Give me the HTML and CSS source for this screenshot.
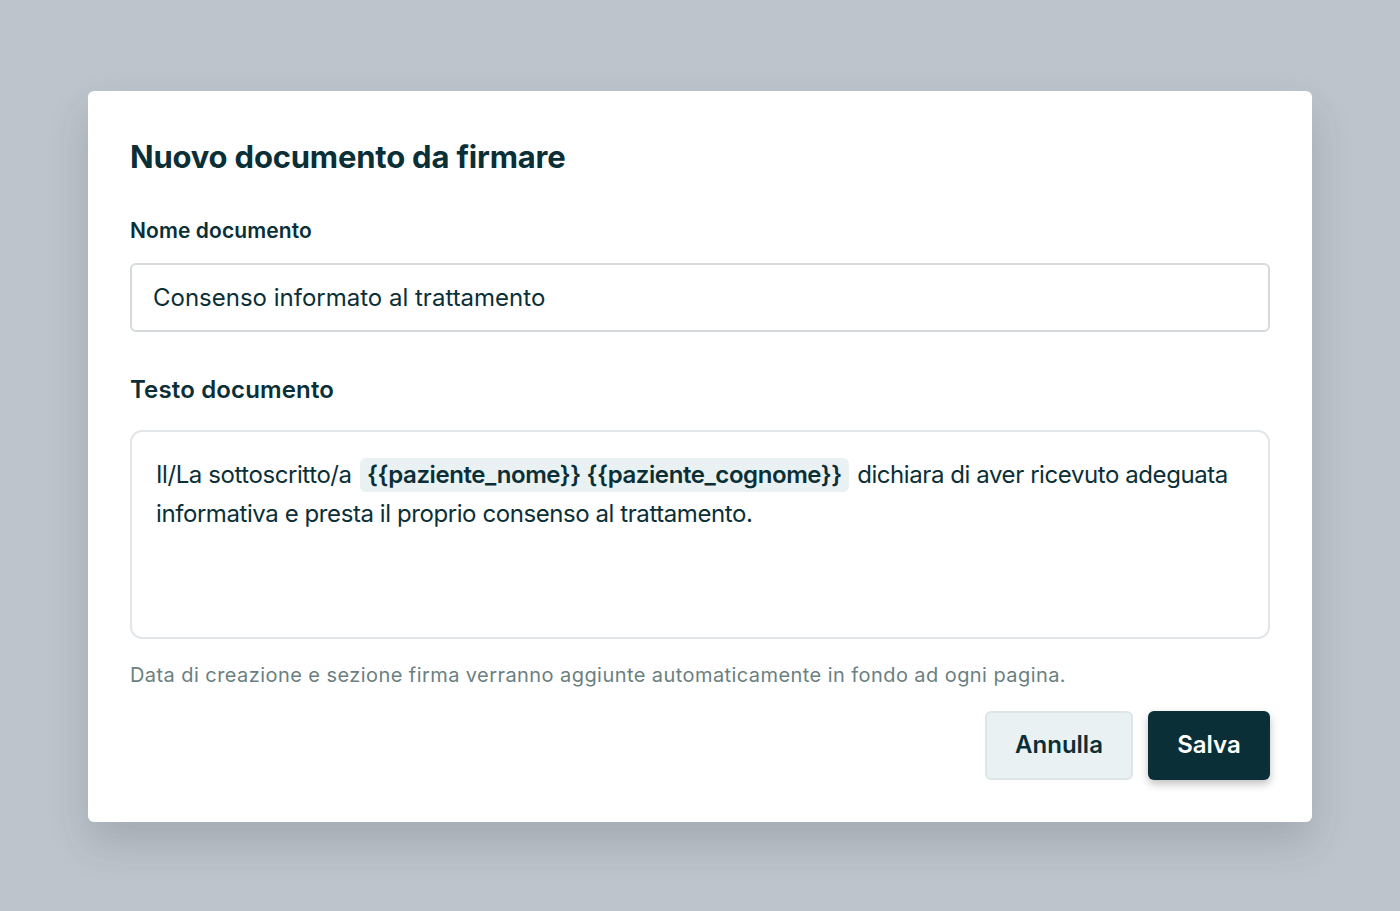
FILE: index.html
```html
<!DOCTYPE html>
<html lang="it">
<head>
<meta charset="utf-8">
<title>Nuovo documento da firmare</title>
<link rel="stylesheet" href="styles.css">
</head>
<body>
<div class="overlay">
  <div class="modal">
    <h1 class="title">Nuovo documento da firmare</h1>
    <label class="label">Nome documento</label>
    <div class="input">Consenso informato al trattamento</div>
    <h2 class="section">Testo documento</h2>
    <div class="editor">
      <p>Il/La sottoscritto/a <span class="chip">{{paziente_nome}} {{paziente_cognome}}</span> dichiara di aver ricevuto adeguata informativa e presta il proprio consenso al trattamento.</p>
    </div>
    <p class="hint">Data di creazione e sezione firma verranno aggiunte automaticamente in fondo ad ogni pagina.</p>
    <div class="actions">
      <button class="btn btn-secondary">Annulla</button>
      <button class="btn btn-primary">Salva</button>
    </div>
  </div>
</div>
</body>
</html>
```

FILE: styles.css
```css
* { box-sizing: border-box; }
html, body { margin: 0; padding: 0; }
body {
  font-family: Inter, "Noto Sans", sans-serif;
  background: #bdc4cc;
  color: #0b2f37;
  width: 1400px;
  height: 911px;
  overflow: hidden;
}
.overlay {
  padding: 91px 88px 0 88px;
}
.modal {
  background: #ffffff;
  border-radius: 6px;
  height: 731px;
  padding: 38px 42px 0 42px;
  box-shadow: 0 20px 40px rgba(40, 50, 60, 0.18);
  display: flex;
  flex-direction: column;
}
.title {
  margin: 0;
  font-size: 31px;
  font-weight: 700;
  line-height: 56px;
  letter-spacing: -0.2px;
}
.label {
  margin-top: 31px;
  font-size: 21px;
  font-weight: 600;
  line-height: 30px;
  letter-spacing: 0.1px;
}
.input {
  margin-top: 17px;
  height: 69px;
  border: 2px solid #d6dadc;
  border-radius: 6px;
  padding: 0 21px;
  display: flex;
  align-items: center;
  font-size: 24px;
  line-height: 30px;
}
.section {
  margin: 40px 0 0 0;
  font-size: 24px;
  font-weight: 600;
  line-height: 36px;
  letter-spacing: 0.15px;
}
.editor {
  margin-top: 22px;
  height: 209px;
  border: 2px solid #e2e6e8;
  border-radius: 12px;
  padding: 23px 24px;
}
.editor p {
  margin: 0;
  font-size: 24px;
  line-height: 39px;
  letter-spacing: -0.42px;
}
.chip {
  display: inline-block;
  background: #e9f1f2;
  border-radius: 6px;
  padding: 0 7px;
  line-height: 34px;
  font-weight: 600;
  margin: 0 2px;
}
.hint {
  margin: 22px 0 0 0;
  font-size: 20px;
  line-height: 28px;
  color: #6b7f80;
  letter-spacing: 0.43px;
}
.actions {
  margin-top: 22px;
  display: flex;
  justify-content: flex-end;
  gap: 15px;
}
.btn {
  font-family: Inter, "Noto Sans", sans-serif;
  font-size: 24px;
  font-weight: 600;
  height: 69px;
  border-radius: 6px;
  padding: 0 20px 2px 20px;
  cursor: pointer;
}
.btn-secondary {
  background: #e9f1f3;
  border: 2px solid #dde5e7;
  color: #0b2f37;
  width: 148px;
}
.btn-primary {
  background: #0b2f37;
  border: none;
  color: #ffffff;
  width: 122px;
  box-shadow: 0 4px 8px rgba(0, 0, 0, 0.25);
}
```
